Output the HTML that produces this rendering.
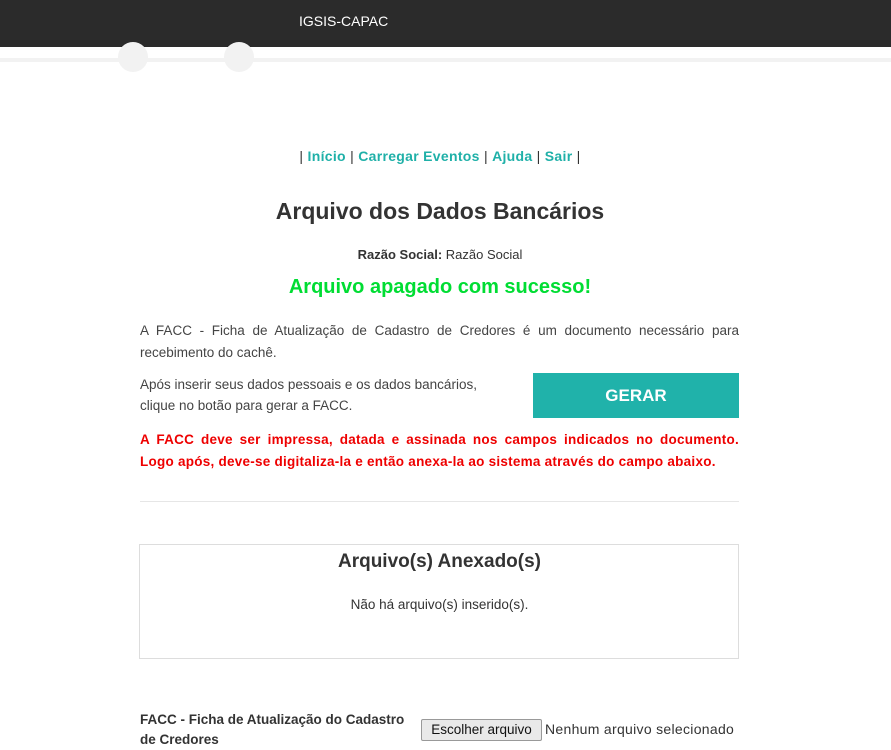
<!DOCTYPE html>
<html><head><meta charset="utf-8"><style>
body{margin:0;width:891px;height:749px;overflow:hidden;background:#fff;font-family:"Liberation Sans",sans-serif;color:#444;position:relative}
.a{position:absolute}
.hdr{left:0;top:0;width:891px;height:47px;background:#2b2b2b}
.c{border-radius:50%;background:#f2f2f2;width:30px;height:30px;top:42px}
a{color:#1fb0a8;font-weight:bold;text-decoration:none}
</style></head><body>
<div class="a hdr"></div>
<div class="a" style="left:299px;top:13px;color:#fff;font-size:14px">IGSIS-CAPAC</div>
<div class="a" style="left:0;top:58px;width:891px;height:4px;background:#f2f2f2"></div>
<div class="a c" style="left:118px"></div>
<div class="a c" style="left:224px"></div>
<div class="a" style="left:0;width:880px;top:148px;text-align:center;font-size:14px;color:#333;letter-spacing:0.3px">| <a>Início</a> | <a>Carregar Eventos</a> | <a>Ajuda</a> | <a>Sair</a> |</div>
<div class="a" style="left:0;width:880px;top:198px;text-align:center;font-size:23px;font-weight:bold;color:#333">Arquivo dos Dados Bancários</div>
<div class="a" style="left:0;width:880px;top:247px;text-align:center;font-size:13px;color:#333"><b>Razão Social:</b> Razão Social</div>
<div class="a" style="left:0;width:880px;top:276px;text-align:center;font-size:20px;font-weight:bold;color:#00dd33">Arquivo apagado com sucesso!</div>
<div class="a" style="left:140px;width:599px;top:320px;font-size:13.5px;line-height:22px;text-align:justify">A FACC - Ficha de Atualização de Cadastro de Credores é um documento necessário para recebimento do cachê.</div>
<div class="a" style="left:140px;width:375px;top:374px;font-size:13.5px;line-height:21px">Após inserir seus dados pessoais e os dados bancários, clique no botão para gerar a FACC.</div>
<div class="a" style="left:533px;top:373px;width:206px;height:45px;background:#20b2aa;color:#fff;font-weight:bold;font-size:17px;text-align:center;line-height:45px">GERAR</div>
<div class="a" style="left:140px;width:599px;top:429px;font-size:13.5px;line-height:22px;font-weight:bold;color:#e00;text-align:justify;letter-spacing:0.25px">A FACC deve ser impressa, datada e assinada nos campos indicados no documento. Logo após, deve-se digitaliza-la e então anexa-la ao sistema através do campo abaixo.</div>
<div class="a" style="left:140px;top:501px;width:599px;height:1px;background:#e6e6e6"></div>
<div class="a" style="left:139px;top:544px;width:598px;height:113px;border:1px solid #ddd"></div>
<div class="a" style="left:140px;width:599px;top:551px;text-align:center;font-size:19px;font-weight:bold;color:#333">Arquivo(s) Anexado(s)</div>
<div class="a" style="left:140px;width:599px;top:597px;text-align:center;font-size:13.5px;color:#333">Não há arquivo(s) inserido(s).</div>
<div class="a" style="left:140px;width:280px;top:710px;font-size:13.5px;line-height:20px;font-weight:bold;color:#333">FACC - Ficha de Atualização do Cadastro de Credores</div>
<div class="a" style="left:421px;top:719px;width:119px;height:20px;border:1px solid #999;border-radius:2px;background:#e9e9e9;font-size:13.5px;text-align:center;line-height:20px;color:#111">Escolher arquivo</div>
<div class="a" style="left:545px;top:721px;font-size:14px;color:#333;letter-spacing:0.3px">Nenhum arquivo selecionado</div>
</body></html>
